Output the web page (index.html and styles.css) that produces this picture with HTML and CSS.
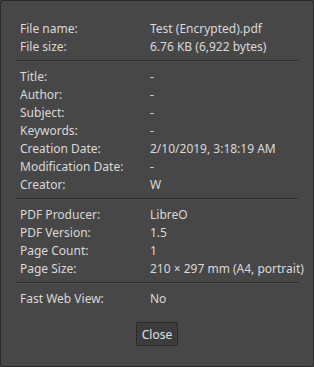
FILE: index.html
```html
<!DOCTYPE html>
<html lang="en">
<head>
  <meta charset="UTF-8" />
  <meta name="viewport" content="width=device-width, initial-scale=1.0" />
  <title>Document Properties</title>
  <link rel="stylesheet" href="styles.css">
</head>
<body>
  <div id="dialog">
    <div class="section">
      <div class="row"><span class="label">File name:</span><span class="value">Test (Encrypted).pdf</span></div>
      <div class="row"><span class="label">File size:</span><span class="value">6.76 KB (6,922 bytes)</span></div>
    </div>
    <hr class="separator">
    <div class="section">
      <div class="row"><span class="label">Title:</span><span class="value">-</span></div>
      <div class="row"><span class="label">Author:</span><span class="value">-</span></div>
      <div class="row"><span class="label">Subject:</span><span class="value">-</span></div>
      <div class="row"><span class="label">Keywords:</span><span class="value">-</span></div>
      <div class="row"><span class="label">Creation Date:</span><span class="value">2/10/2019, 3:18:19 AM</span></div>
      <div class="row"><span class="label">Modification Date:</span><span class="value">-</span></div>
      <div class="row"><span class="label">Creator:</span><span class="value">W</span></div>
    </div>
    <hr class="separator">
    <div class="section">
      <div class="row"><span class="label">PDF Producer:</span><span class="value">LibreO</span></div>
      <div class="row"><span class="label">PDF Version:</span><span class="value">1.5</span></div>
      <div class="row"><span class="label">Page Count:</span><span class="value">1</span></div>
      <div class="row"><span class="label">Page Size:</span><span class="value">210 × 297 mm (A4, portrait)</span></div>
    </div>
    <hr class="separator">
    <div class="section">
      <div class="row"><span class="label">Fast Web View:</span><span class="value">No</span></div>
    </div>
    <div class="buttons">
      <button id="close-button">Close</button>
    </div>
  </div>
</body>
</html>
```

FILE: styles.css
```css
*, *::before, *::after { box-sizing: border-box; }
html, body { margin: 0; height: 100%; }
body { background: #474747; font-family: 'Noto Sans', 'Open Sans', sans-serif; font-size: 12px; color: #d9d9d9; }

/* Dialog frame */
#dialog { height: 367px; border: 1px solid #2a2a2a; border-radius: 3px; background: #474747; padding: 19px 15px 0 15px; }

/* Property rows */
.section { padding: 0 4px; }
.row { display: flex; height: 18px; line-height: 18px; white-space: nowrap; }
.label { width: 130px; flex: none; }
.value { flex: 1; }

.separator { border: none; border-top: 1px solid #2c2c2c; border-bottom: 1px solid #4f4f4f; height: 0; margin: 4px 0 6px; }

/* Close button */
.buttons { display: flex; justify-content: center; margin-top: 14px; }
#close-button { height: 24px; width: 42px; padding: 0; font: inherit; color: #e0e0e0; background: #3c3c3c; border: 1px solid #2a2a2a; border-radius: 2px; }
```
